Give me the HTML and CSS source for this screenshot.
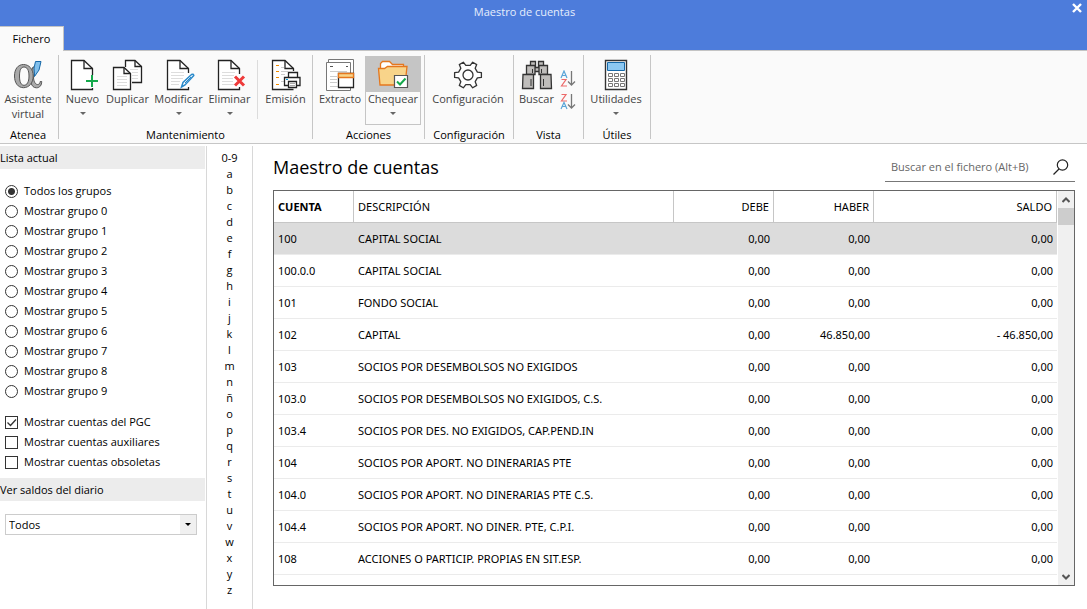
FILE: index.html
```html
<!DOCTYPE html>
<html lang="es">
<head>
<meta charset="utf-8">
<title>Maestro de cuentas</title>
<link rel="stylesheet" href="styles.css">
</head>
<body>
<div class="app">
  <header class="titlebar">
    <div class="titlebar-top">
      <span class="titlebar-title">Maestro de cuentas</span>
      <button class="close" type="button" aria-label="Cerrar">
        <svg width="10" height="10" viewBox="0 0 10 10"><path d="M1 1l8 8M9 1l-8 8" stroke="#fff" stroke-width="2.4"/></svg>
      </button>
    </div>
    <nav class="tabs"><button class="tab" type="button">Fichero</button></nav>
  </header>

  <div class="ribbon">
    <section class="group g-atenea">
      <div class="tools">
        <button class="tool w-full" type="button">
          <svg class="icon" viewBox="0 0 32 32"><g fill="#a9a9a9" stroke="#555"><path d="M24 8C23.500 13 22 16 21.500 19C22 23 23.500 25.500 25.500 25.500C27.500 25.500 28 24 28.200 22.500H29.700C29.700 26 28 28.800 24.500 28.800C21.500 28.800 20 27 19 24L18 15L21 8Z"/><path fill-rule="evenodd" d="M11.500 5.500C17 5.500 21.200 10 21.200 17S17 28.700 11.500 28.700S2.500 24 2.500 17S6 5.500 11.500 5.500ZM12 8C9 8 7.500 11 7.500 17S9 26.300 12 26.300S17 23 17 17S15 8 12 8Z"/></g><path d="M23.500 2.500h5.500l-2 8.500-4.500 6.500-.5-8.500z" fill="#82c0ec" stroke="#1668a8"/></svg>
          <span class="label">Asistente<br>virtual</span>
        </button>
      </div>
      <h2 class="group-name">Atenea</h2>
    </section>

    <section class="group g-mant">
      <div class="tools">
        <button class="tool w-s" type="button">
          <svg class="icon" viewBox="0 0 32 32"><path d="M25.500 16V9.500L17 1.500H4.500v29H25.500V29" fill="#fff" stroke="#222" stroke-width="1.300"/><path d="M17 1.500V9.500H25.500" fill="none" stroke="#222" stroke-width="1.300"/><path d="M19 22h12M25 16v12" stroke="#14a84b" stroke-width="2"/></svg>
          <span class="label">Nuevo</span><i class="caret"></i>
        </button>
        <button class="tool w-s" type="button">
          <svg class="icon" viewBox="0 0 32 32"><path d="M13.500 8V1.500H23l6.500 6V23.500H20" fill="#fff" stroke="#222" stroke-width="1.300"/><path d="M23 1.500v6h6.500" fill="none" stroke="#222" stroke-width="1.300"/><path d="M18 10.500h8M20 13.500h6M20 16.500h6M20 19.500h6" stroke="#ddd"/><path d="M1.500 8.500H12l6.500 6v16h-17z" fill="#fff" stroke="#222" stroke-width="1.300"/><path d="M12 8.500v6h6.500" fill="none" stroke="#222" stroke-width="1.300"/><path d="M5 17.500h10M5 20.500h10M5 23.500h10M5 26.500h10" stroke="#ddd"/></svg>
          <span class="label">Duplicar</span>
        </button>
        <button class="tool w-m" type="button">
          <svg class="icon" viewBox="0 0 32 32"><path d="M25.500 14V9.500L17 1.500H4.500v29H25.500V28" fill="#fff" stroke="#222" stroke-width="1.300"/><path d="M17 1.500V9.500H25.500" fill="none" stroke="#222" stroke-width="1.300"/><path d="M8 13.500h13M8 16.500h13M8 19.500h12M8 22.500h9M8 25.500h8" stroke="#ddd"/><path d="M18.500 28l1.500-4.500 8.500-8q2-1 2.300 1l-8.800 9.500z" fill="#fff" stroke="#2a8acb" stroke-width="1.500"/><path d="M22 24l6-6" stroke="#2a8acb"/></svg>
          <span class="label">Modificar</span><i class="caret"></i>
        </button>
        <button class="tool w-e" type="button">
          <svg class="icon" viewBox="0 0 32 32"><path d="M25.500 15V9.500L17 1.500H4.500v29H25.500V28" fill="#fff" stroke="#222" stroke-width="1.300"/><path d="M17 1.500V9.500H25.500" fill="none" stroke="#222" stroke-width="1.300"/><path d="M8 13.500h13M8 16.500h12M8 19.500h11M8 22.500h11M8 25.500h12" stroke="#ddd"/><path d="M21 17.500l9 9M30 17.500l-9 9" stroke="#ee3a3a" stroke-width="3"/></svg>
          <span class="label">Eliminar</span><i class="caret"></i>
        </button>
        <span class="divider"></span>
        <button class="tool w-s" type="button">
          <svg class="icon" viewBox="0 0 32 32"><path d="M23.500 12V9.500L15 1.500H2.500v29H23.500" fill="#fff" stroke="#222" stroke-width="1.300"/><path d="M15 1.500V9.500H23.500" fill="none" stroke="#222" stroke-width="1.300"/><path d="M6 6.500h3M6 12.500h3M6 18.500h3M6 25.500h3" stroke="#f28c00"/><path d="M11 8.500h3M11 12.500h7M11 15.500h4M11 22.500h3" stroke="#ccc"/><path d="M18.500 18v-4.500h9V18" fill="#fff" stroke="#222" stroke-width="1.300"/><path d="M14.500 18.500h15.500v8h-15.500z" fill="#fff" stroke="#222" stroke-width="1.300"/><path d="M18.500 22.500h8v6h-8z" fill="#fff" stroke="#222" stroke-width="1.300"/><path d="M20 24.500h5M20 26.500h5" stroke="#aaa"/><path d="M16 20.500h2" stroke="#0098d8"/></svg>
          <span class="label">Emisión</span>
        </button>
      </div>
      <h2 class="group-name">Mantenimiento</h2>
    </section>

    <section class="group g-acc">
      <div class="tools">
        <button class="tool w-x" type="button">
          <svg class="icon" viewBox="0 0 32 32"><path d="M4.500 4V.5h25V14" fill="#fff" stroke="#777"/><path d="M2.500 3.500h24v28h-24z" fill="#fff" stroke="#777"/><path d="M6 7.500h3M22 7.500h2" stroke="#555"/><path d="M6 12.500h17M6 17.500h7M6 20.500h7M6 23.500h7M6 27.500h10" stroke="#ccc"/><path d="M14.500 14.500h15v14h-15z" fill="#fff" stroke="#222" stroke-width="1.300"/><path d="M14.500 14.500h15v4h-15z" fill="#f8d48a" stroke="#e5771e" stroke-width="1.300"/></svg>
          <span class="label">Extracto</span>
        </button>
        <button class="tool w-c selected" type="button">
          <svg class="icon" viewBox="0 0 32 32"><path d="M3.500 10V4.500l2-2h7l3 3h11v4" fill="#fff" stroke="#e5771e" stroke-width="1.300"/><path d="M1.500 9.500h6l3-2h19.500l-2 18.500h-25z" fill="#f8d48a" stroke="#e5771e" stroke-width="1.300"/><path d="M17.500 16.500h13v12h-13z" fill="#fff" stroke="#555" stroke-width="1.200"/><path d="M20 22.500l3 3 5.500-6" fill="none" stroke="#14a84b" stroke-width="2"/></svg>
          <span class="label">Chequear</span><i class="caret"></i>
        </button>
      </div>
      <h2 class="group-name">Acciones</h2>
    </section>

    <section class="group g-conf">
      <div class="tools">
        <button class="tool w-full" type="button">
          <svg class="icon" viewBox="0 0 32 32"><path d="M25.400 13.100L29.400 13.600V18.400L25.400 18.900L23.200 22.700L24.700 26.400L20.700 28.800L18.200 25.600H13.800L11.300 28.800L7.300 26.400L8.800 22.700L6.600 18.900L2.600 18.400V13.600L6.600 13.100L8.800 9.300L7.300 5.600L11.300 3.200L13.800 6.400H18.200L20.700 3.200L24.700 5.600L23.200 9.300Z" fill="#fff" stroke="#333" stroke-width="1.300" stroke-linejoin="round"/><circle cx="16" cy="16" r="5" fill="none" stroke="#333" stroke-width="1.300"/></svg>
          <span class="label">Configuración</span>
        </button>
      </div>
      <h2 class="group-name">Configuración</h2>
    </section>

    <section class="group g-vista">
      <div class="tools">
        <button class="tool w-s" type="button">
          <svg class="icon" viewBox="0 0 32 32"><g fill="#bfbdbb" stroke="#333" stroke-width="1.300"><path d="M9.500 2.500h5v5h-5zM17.500 2.500h5v5h-5z"/><path d="M5.500 6.500h8.500v9H5.500zM18 6.500h8.500v9H18zM14 8.500h4v4h-4z"/><path d="M2 15.500h10.500v14H1.500zM19.500 15.500H30l.5 14h-11z"/></g><path d="M10 20v7M22.500 20v7M11.500 10v4M20.500 10v4" stroke="#333"/></svg>
          <span class="label">Buscar</span>
        </button>
        <div class="sorts">
          <button class="sort" type="button" aria-label="Orden ascendente">
            <svg width="16" height="18" viewBox="0 0 16 18"><path d="M1 8L4 1l3 7M2 5.500h4" fill="none" stroke="#5aa5d8" stroke-width="1.200"/><path d="M1.500 9.500H6L1.500 16H7" fill="none" stroke="#ec6a6a" stroke-width="1.200"/><path d="M11.500 1v14M8 11.500l3.500 3.500 3.500-3.500" fill="none" stroke="#777" stroke-width="1.300"/></svg>
          </button>
          <button class="sort" type="button" aria-label="Orden descendente">
            <svg width="16" height="18" viewBox="0 0 16 18"><path d="M1.500 1.500H6L1.500 8H7" fill="none" stroke="#ec6a6a" stroke-width="1.200"/><path d="M1 16l3-6.500L7 16M2 13.500h4" fill="none" stroke="#5aa5d8" stroke-width="1.200"/><path d="M11.500 1v14M8 11.500l3.500 3.500 3.500-3.500" fill="none" stroke="#777" stroke-width="1.300"/></svg>
          </button>
        </div>
      </div>
      <h2 class="group-name">Vista</h2>
    </section>

    <section class="group g-util">
      <div class="tools">
        <button class="tool w-full" type="button">
          <svg class="icon" viewBox="0 0 32 32"><path d="M5.500 1.500h21v29h-21z" fill="#fff" stroke="#333" stroke-width="1.400"/><path d="M7.500 3.500h17v8h-17z" fill="#8cc8f2" stroke="#1668a8"/><path d="M8.500 14.500h4v3h-4zM14.500 14.500h4v3h-4zM20.500 14.500h4v3h-4zM8.500 19.500h4v3h-4zM14.500 19.500h4v3h-4zM20.500 19.500h4v3h-4zM8.500 24.500h4v3h-4zM14.500 24.500h4v3h-4zM20.500 24.500h4v3h-4z" fill="none" stroke="#777"/></svg>
          <span class="label">Utilidades</span><i class="caret"></i>
        </button>
      </div>
      <h2 class="group-name">Útiles</h2>
    </section>
  </div>

  <div class="body">
    <aside class="sidebar">
      <h3 class="side-title">Lista actual</h3>
      <div class="options">
        <label class="option"><input class="radio" type="radio" name="grupo" checked>Todos los grupos</label>
        <label class="option"><input class="radio" type="radio" name="grupo">Mostrar grupo 0</label>
        <label class="option"><input class="radio" type="radio" name="grupo">Mostrar grupo 1</label>
        <label class="option"><input class="radio" type="radio" name="grupo">Mostrar grupo 2</label>
        <label class="option"><input class="radio" type="radio" name="grupo">Mostrar grupo 3</label>
        <label class="option"><input class="radio" type="radio" name="grupo">Mostrar grupo 4</label>
        <label class="option"><input class="radio" type="radio" name="grupo">Mostrar grupo 5</label>
        <label class="option"><input class="radio" type="radio" name="grupo">Mostrar grupo 6</label>
        <label class="option"><input class="radio" type="radio" name="grupo">Mostrar grupo 7</label>
        <label class="option"><input class="radio" type="radio" name="grupo">Mostrar grupo 8</label>
        <label class="option"><input class="radio" type="radio" name="grupo">Mostrar grupo 9</label>
      </div>
      <div class="options checks">
        <label class="option"><span class="box"><input class="check" type="checkbox" checked><svg class="tick" viewBox="0 0 13 13"><path d="M2.500 6.500l3 3 5.500-6" fill="none" stroke="#333" stroke-width="1.300"/></svg></span>Mostrar cuentas del PGC</label>
        <label class="option"><span class="box"><input class="check" type="checkbox"></span>Mostrar cuentas auxiliares</label>
        <label class="option"><span class="box"><input class="check" type="checkbox"></span>Mostrar cuentas obsoletas</label>
      </div>
      <h3 class="side-title"><label for="saldos">Ver saldos del diario</label></h3>
      <div class="combo">
        <select id="saldos" class="combo-select"><option>Todos</option></select>
        <span class="combo-arrow"><i class="combo-caret"></i></span>
      </div>
    </aside>

    <nav class="letters" aria-label="Índice">
      <button class="letter" type="button">0-9</button>
      <button class="letter" type="button">a</button>
      <button class="letter" type="button">b</button>
      <button class="letter" type="button">c</button>
      <button class="letter" type="button">d</button>
      <button class="letter" type="button">e</button>
      <button class="letter" type="button">f</button>
      <button class="letter" type="button">g</button>
      <button class="letter" type="button">h</button>
      <button class="letter" type="button">i</button>
      <button class="letter" type="button">j</button>
      <button class="letter" type="button">k</button>
      <button class="letter" type="button">l</button>
      <button class="letter" type="button">m</button>
      <button class="letter" type="button">n</button>
      <button class="letter" type="button">ñ</button>
      <button class="letter" type="button">o</button>
      <button class="letter" type="button">p</button>
      <button class="letter" type="button">q</button>
      <button class="letter" type="button">r</button>
      <button class="letter" type="button">s</button>
      <button class="letter" type="button">t</button>
      <button class="letter" type="button">u</button>
      <button class="letter" type="button">v</button>
      <button class="letter" type="button">w</button>
      <button class="letter" type="button">x</button>
      <button class="letter" type="button">y</button>
      <button class="letter" type="button">z</button>
    </nav>

    <main class="main">
      <div class="main-head">
        <h1 class="main-title">Maestro de cuentas</h1>
        <div class="search">
          <input class="search-input" type="text" aria-label="Buscar en el fichero" placeholder="Buscar en el fichero (Alt+B)">
          <button class="search-btn" type="button" aria-label="Buscar"><svg width="16" height="16" viewBox="0 0 16 16"><circle cx="9.500" cy="6" r="5.200" fill="none" stroke="#222" stroke-width="1.200"/><path d="M6 10L.5 15.500" stroke="#222" stroke-width="1.200"/></svg></button>
        </div>
      </div>
      <div class="grid">
        <div class="grid-view">
          <table class="accounts">
            <colgroup><col class="c-cuenta"><col class="c-desc"><col class="c-num"><col class="c-num"><col class="c-saldo"></colgroup>
            <thead><tr><th class="sorted">CUENTA</th><th>DESCRIPCIÓN</th><th class="num">DEBE</th><th class="num">HABER</th><th class="num">SALDO</th></tr></thead>
            <tbody>
              <tr class="current"><td>100</td><td>CAPITAL SOCIAL</td><td class="num">0,00</td><td class="num">0,00</td><td class="num">0,00</td></tr>
              <tr><td>100.0.0</td><td>CAPITAL SOCIAL</td><td class="num">0,00</td><td class="num">0,00</td><td class="num">0,00</td></tr>
              <tr><td>101</td><td>FONDO SOCIAL</td><td class="num">0,00</td><td class="num">0,00</td><td class="num">0,00</td></tr>
              <tr><td>102</td><td>CAPITAL</td><td class="num">0,00</td><td class="num">46.850,00</td><td class="num">- 46.850,00</td></tr>
              <tr><td>103</td><td>SOCIOS POR DESEMBOLSOS NO EXIGIDOS</td><td class="num">0,00</td><td class="num">0,00</td><td class="num">0,00</td></tr>
              <tr><td>103.0</td><td>SOCIOS POR DESEMBOLSOS NO EXIGIDOS, C.S.</td><td class="num">0,00</td><td class="num">0,00</td><td class="num">0,00</td></tr>
              <tr><td>103.4</td><td>SOCIOS POR DES. NO EXIGIDOS, CAP.PEND.IN</td><td class="num">0,00</td><td class="num">0,00</td><td class="num">0,00</td></tr>
              <tr><td>104</td><td>SOCIOS POR APORT. NO DINERARIAS PTE</td><td class="num">0,00</td><td class="num">0,00</td><td class="num">0,00</td></tr>
              <tr><td>104.0</td><td>SOCIOS POR APORT. NO DINERARIAS PTE C.S.</td><td class="num">0,00</td><td class="num">0,00</td><td class="num">0,00</td></tr>
              <tr><td>104.4</td><td>SOCIOS POR APORT. NO DINER. PTE, C.P.I.</td><td class="num">0,00</td><td class="num">0,00</td><td class="num">0,00</td></tr>
              <tr><td>108</td><td>ACCIONES O PARTICIP. PROPIAS EN SIT.ESP.</td><td class="num">0,00</td><td class="num">0,00</td><td class="num">0,00</td></tr>
            </tbody>
          </table>
        </div>
        <div class="scrollbar">
          <button class="scroll-btn" type="button" aria-label="Subir"><svg width="8" height="6" viewBox="0 0 8 6"><path d="M.5 5L4 1.500 7.500 5" fill="none" stroke="#555" stroke-width="2"/></svg></button>
          <div class="thumb"></div>
          <button class="scroll-btn scroll-down" type="button" aria-label="Bajar"><svg width="8" height="6" viewBox="0 0 8 6"><path d="M.5 1L4 4.500 7.500 1" fill="none" stroke="#555" stroke-width="2"/></svg></button>
        </div>
      </div>
    </main>
  </div>
</div>
</body>
</html>
```
FILE: styles.css
```css
* { box-sizing: border-box; }
body { margin: 0; background: #fff; color: #000; font: 11px/16px "Open Sans", "Noto Sans", sans-serif; }
button, input, select { font: inherit; color: inherit; }
button { border: 0; padding: 0; margin: 0; background: none; }
h1, h2, h3 { margin: 0; font-weight: 400; }
svg { display: block; }

.app { display: flex; flex-direction: column; min-height: 100vh; }

.titlebar { background: #4d7cdb; }
.titlebar-top { display: flex; height: 26px; }
.titlebar-title { flex: 1; padding-top: 4px; text-align: center; color: #e6eefc; }
.close { display: flex; width: 38px; padding: 3px 5px 0 0; justify-content: flex-end; }
.tabs { display: flex; height: 25px; box-shadow: inset 0 -1px #c4c4c4; }
.tab { background: #fafafa; width: 64px; border: 1px solid #c4c4c4; border-width: 1px 1px 0 0; }

.ribbon { display: flex; background: #fafafa; border-bottom: 1px solid #c6c6c6; padding: 4px 0; }
.group { display: flex; flex-direction: column; border-right: 1px solid #c6c6c6; }
.tools { display: flex; height: 72px; padding: 1px 0 0 1px; }
.group-name { font-size: 11px; line-height: 16px; height: 12px; text-align: center; }
.g-atenea { width: 59px; }
.g-mant { width: 254px; }
.g-acc { width: 112px; }
.g-conf { width: 89px; }
.g-vista { width: 70px; }
.g-util { width: 67px; }
.g-atenea .tools, .g-conf .tools, .g-util .tools { padding: 1px 2px 0 0; }
.g-atenea .group-name { padding-right: 2px; }
.g-vista .tools { padding-left: 0; }
.tool { display: flex; flex-direction: column; align-items: center; height: 69px; padding-top: 3px; color: #444; white-space: nowrap; }
.w-full { width: 100%; }
.w-s { width: 45px; }
.w-m { width: 57px; }
.w-e { width: 45px; }
.w-x { width: 51px; padding-left: 1px; }
.w-c { width: 56px; }
.icon { width: 32px; height: 32px; flex: none; }
.label { line-height: 15px; }
.caret { border: solid transparent; border-width: 3px 3px 0; border-top-color: #666; margin-top: 6px; }
.selected { background: linear-gradient(#c5c5c5 36px, #fafafa 36px); box-shadow: inset 0 0 0 1px #c5c5c5; }
.divider { width: 1px; margin: 4px 5px 8px; background: #dcdcdc; }
.sorts { display: flex; flex-direction: column; gap: 5px; padding: 14px 0 0 1px; }

.body { display: flex; flex: 1; padding-top: 2px; }
.sidebar { width: 206px; padding-right: 1px; }
.side-title { font-size: 11px; height: 23px; line-height: 23px; background: #ececec; }
.options { padding: 12px 0 0 5px; }
.option { display: flex; align-items: center; gap: 6px; height: 20px; }
.checks { padding: 11px 0 6px 5px; }
.radio, .check { appearance: none; margin: 0; width: 13px; height: 13px; border: 1px solid #333; background: #fff; display: block; }
.radio { border-radius: 50%; }
.radio:checked { background: radial-gradient(circle, #333 0 3px, #fff 4px); }
.box { position: relative; }
.tick { position: absolute; inset: 0; pointer-events: none; }
.combo { display: flex; width: 192px; height: 21px; margin: 13px 5px 0; border: 1px solid #ccc; position: relative; }
.combo-select { appearance: none; flex: 1; border: 0; background: #fff; padding: 0 3px; }
.combo-arrow { position: absolute; right: 0; top: 0; width: 16px; height: 100%; background: #f0f0f0; display: flex; align-items: center; justify-content: center; pointer-events: none; }
.combo-caret { border: solid transparent; border-width: 3px 3px 0; border-top-color: #000; }

.letters { display: flex; flex-direction: column; align-items: center; width: 47px; padding-top: 4px; border: solid #d8d8d8; border-width: 0 1px; }
.letter { height: 16px; }

.main { flex: 1; display: flex; flex-direction: column; min-width: 0; padding: 0 12px 23px 20px; }
.main-head { display: flex; justify-content: space-between; height: 44px; padding-top: 8px; }
.main-title { font-size: 18px; line-height: 26px; }
.search { display: flex; align-items: center; width: 190px; height: 28px; padding-bottom: 2px; border-bottom: 1px solid #777; }
.search-input { flex: 1; min-width: 0; border: 0; padding: 0 6px; outline: 0; background: none; }
.search-input::placeholder { color: #666; opacity: 1; }
.search-btn { padding-right: 6px; }

.grid { flex: 1; display: flex; border: 1px solid #666; }
.grid-view { flex: 1; min-width: 0; padding-right: 1px; }
.accounts { width: 100%; table-layout: fixed; border-collapse: separate; border-spacing: 0; font: 11px/16px "Noto Sans", "Open Sans", sans-serif; }
.c-cuenta { width: 80px; }
.c-desc { width: 320px; }
.c-num { width: 100px; }
.accounts th, .accounts td { height: 32px; padding: 0 4px; text-align: left; font-weight: 400; border-bottom: 1px solid #ebebeb; white-space: nowrap; }
.accounts th { border-bottom-color: #c6c6c6; border-right: 1px solid #c6c6c6; }
.accounts .sorted { font-weight: 700; }
.accounts .num { text-align: right; }
.accounts .current td { background: #dcdcdc; }
.scrollbar { display: flex; flex-direction: column; width: 16px; background: #f0f0f0; }
.scroll-btn { display: flex; align-items: center; justify-content: center; height: 17px; }
.scroll-down { margin-top: auto; }
.thumb { height: 17px; background: #cdcdcd; }
```
